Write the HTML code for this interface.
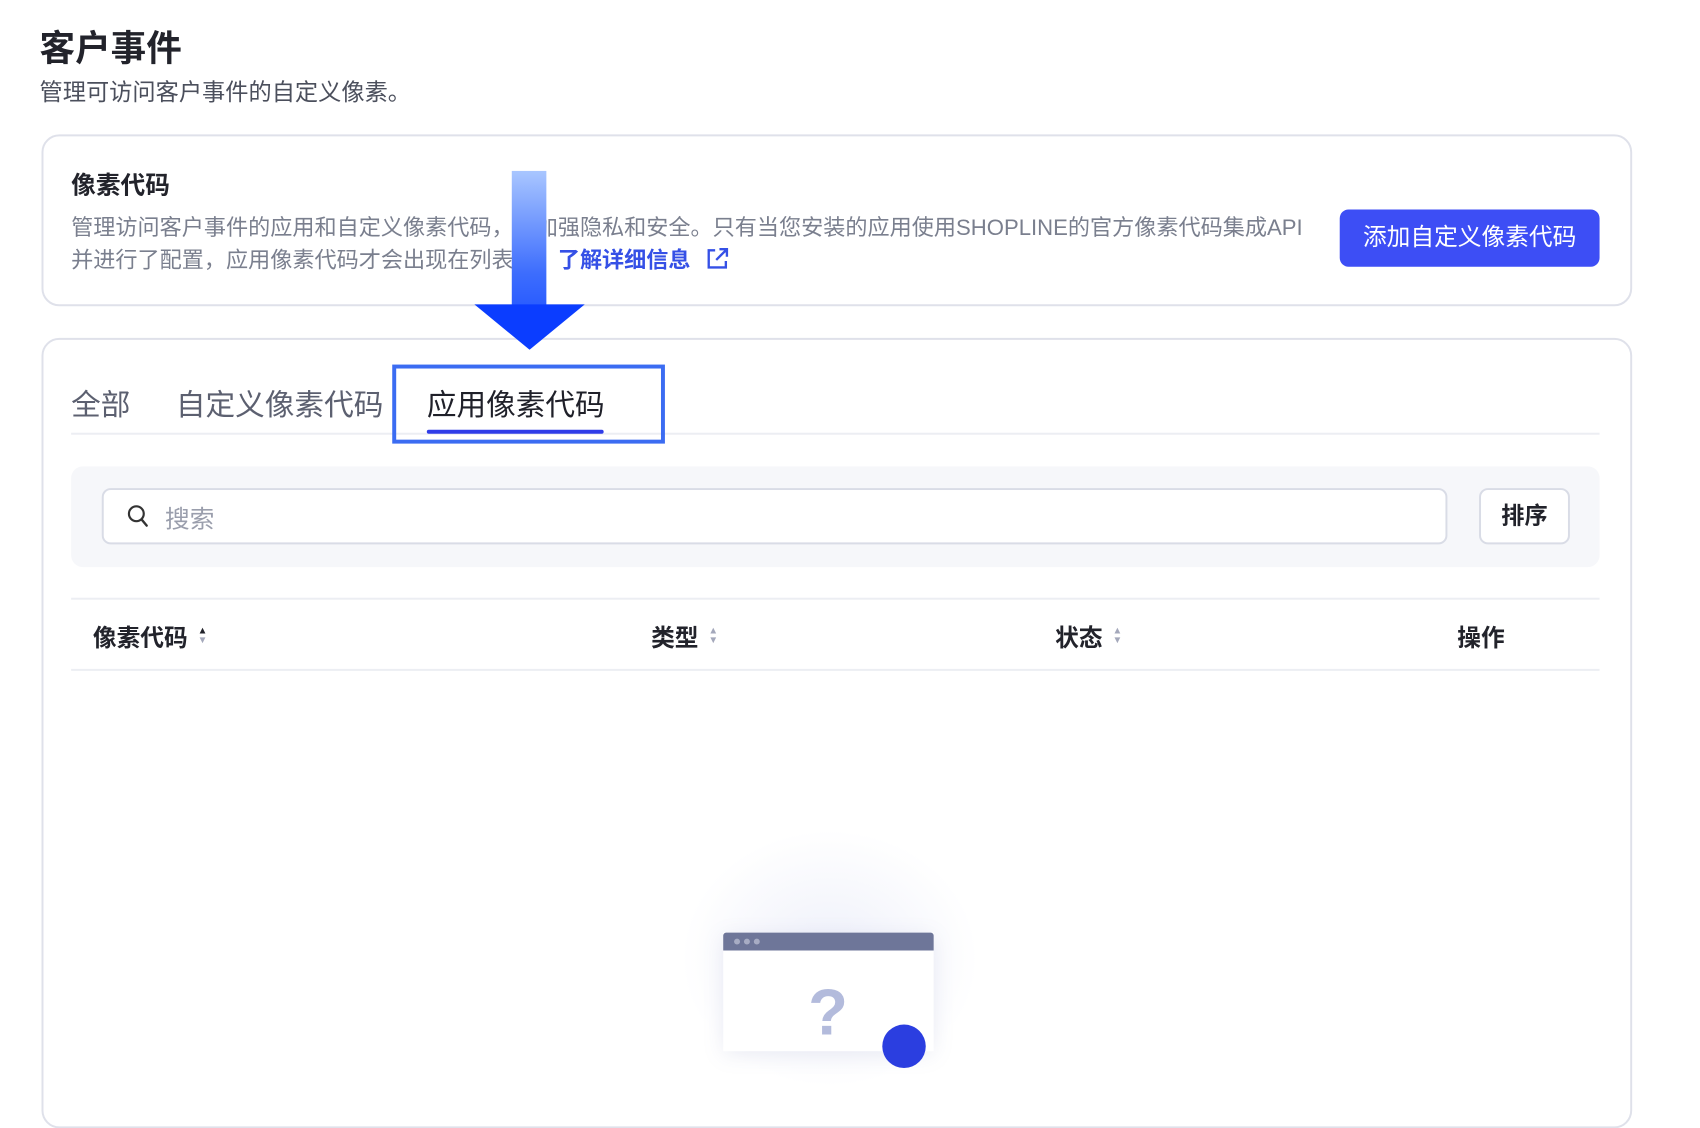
<!DOCTYPE html>
<html><head><meta charset="utf-8"><style>
*{margin:0;padding:0;box-sizing:border-box}
body{width:1700px;height:1030px;overflow:hidden;background:#fff;font-family:"Liberation Sans","Noto Sans CJK SC",sans-serif;position:relative;color:#1f2029}
#w{position:absolute;left:0;top:0;width:1721px;height:1043px;transform:scale(0.988);transform-origin:0 0}
.a{position:absolute;white-space:nowrap}
.card{position:absolute;border:2px solid #dfe1ea;border-radius:18px;background:#fff}
.s{display:inline-block;width:12px;margin-left:10px;vertical-align:3px;font-size:10px;line-height:10px;color:#a4a8bb}
</style></head><body><div id="w">
<div class="a" style="left:40px;top:20px;font-size:36px;font-weight:700;color:#22232b">客户事件</div>
<div class="a" style="left:40px;top:74px;font-size:23.5px;color:#4b4f5c">管理可访问客户事件的自定义像素。</div>

<div class="card" style="left:42px;top:136px;width:1610px;height:174px"></div>
<div class="a" style="left:72px;top:168px;font-size:25px;font-weight:700;color:#22232b">像素代码</div>
<div class="a" style="left:72px;top:213px;font-size:22.4px;color:#7a7f8e">管理访问客户事件的应用和自定义像素代码，以加强隐私和安全。只有当您安装的应用使用SHOPLINE的官方像素代码集成API</div>
<div class="a" style="left:72px;top:246px;font-size:22.4px;color:#7a7f8e">并进行了配置，应用像素代码才会出现在列表中。<span style="color:#3550e6;font-weight:700">了解详细信息</span>
<svg width="26" height="26" viewBox="0 0 24 24" style="vertical-align:-4px;margin-left:8px"><path d="M10 4H4v16h16v-6M14 3h7v7M21 3l-10 10" fill="none" stroke="#3550e6" stroke-width="2.2"/></svg></div>
<div class="a" style="left:1356px;top:212px;width:263px;height:58px;background:#3d4ef5;border-radius:9px;color:#fff;font-size:24px;text-align:center;line-height:58px">添加自定义像素代码</div>

<div class="card" style="left:42px;top:342px;width:1610px;height:800px"></div>
<div class="a" style="left:72px;top:385px;font-size:30px;color:#5c6070">全部</div>
<div class="a" style="left:178px;top:385px;font-size:30px;color:#5c6070">自定义像素代码</div>
<div class="a" style="left:432px;top:385px;font-size:30px;color:#1f2029">应用像素代码</div>
<div class="a" style="left:72px;top:438px;width:1547px;height:2px;background:#eceef3"></div>
<div class="a" style="left:432px;top:435px;width:179px;height:4px;background:#2f3ce8;border-radius:2px"></div>
<div class="a" style="left:397px;top:369px;width:276px;height:80px;border:4px solid #3b6cf2"></div>

<div class="a" style="left:518px;top:173px;width:35px;height:138px;background:linear-gradient(#a9c6ff,#3d6dfd 75%,#2a5cff)"></div>
<svg class="a" style="left:480px;top:308px" width="112" height="46"><polygon points="0,0 112,0 56,46" fill="#0b3dff"/></svg>

<div class="a" style="left:72px;top:472px;width:1547px;height:102px;background:#f6f7fa;border-radius:12px"></div>
<div class="a" style="left:103px;top:494px;width:1362px;height:57px;background:#fff;border:2px solid #d9dce6;border-radius:9px"></div>
<svg class="a" style="left:128px;top:510px" width="24" height="26" viewBox="0 0 24 26"><circle cx="10" cy="10" r="7.5" fill="none" stroke="#333" stroke-width="2.2"/><path d="M15.5 16l5 6" stroke="#333" stroke-width="2.4" stroke-linecap="round"/></svg>
<div class="a" style="left:167px;top:506px;font-size:25px;color:#9a9eac">搜索</div>
<div class="a" style="left:1497px;top:494px;width:92px;height:57px;background:#fff;border:2px solid #d9dce6;border-radius:9px;text-align:center;line-height:53px;font-size:23.5px;font-weight:700;color:#22232b">排序</div>

<div class="a" style="left:72px;top:605px;width:1547px;height:2px;background:#eceef3"></div>
<div class="a" style="left:72px;top:677px;width:1547px;height:2px;background:#eceef3"></div>
<div class="a" style="left:94px;top:626px;font-size:24px;font-weight:700;color:#22232b">像素代码<span class="s"><span style="color:#22232b">▲</span><br>▼</span></div>
<div class="a" style="left:659px;top:626px;font-size:24px;font-weight:700;color:#22232b">类型<span class="s">▲<br>▼</span></div>
<div class="a" style="left:1068px;top:626px;font-size:24px;font-weight:700;color:#22232b">状态<span class="s">▲<br>▼</span></div>
<div class="a" style="left:1475px;top:626px;font-size:24px;font-weight:700;color:#22232b">操作</div>

<div class="a" style="left:690px;top:840px;width:300px;height:260px;border-radius:50%;background:radial-gradient(closest-side,#eef0fa,#fff)"></div>
<div class="a" style="left:732px;top:944px;width:213px;height:120px;background:#fff;box-shadow:0 4px 20px rgba(120,130,180,.15)"></div>
<div class="a" style="left:732px;top:944px;width:213px;height:18px;background:#6e7699;border-radius:3px 3px 0 0"></div>
<div class="a" style="left:743px;top:950px;width:6px;height:6px;border-radius:50%;background:#a7acc4;box-shadow:10px 0 #a7acc4,20px 0 #a7acc4"></div>
<div class="a" style="left:818px;top:986px;font-size:66px;font-weight:700;color:#b3bbdc">?</div>
<div class="a" style="left:893px;top:1037px;width:44px;height:44px;border-radius:50%;background:#2b3ee0"></div>
</div></body></html>
